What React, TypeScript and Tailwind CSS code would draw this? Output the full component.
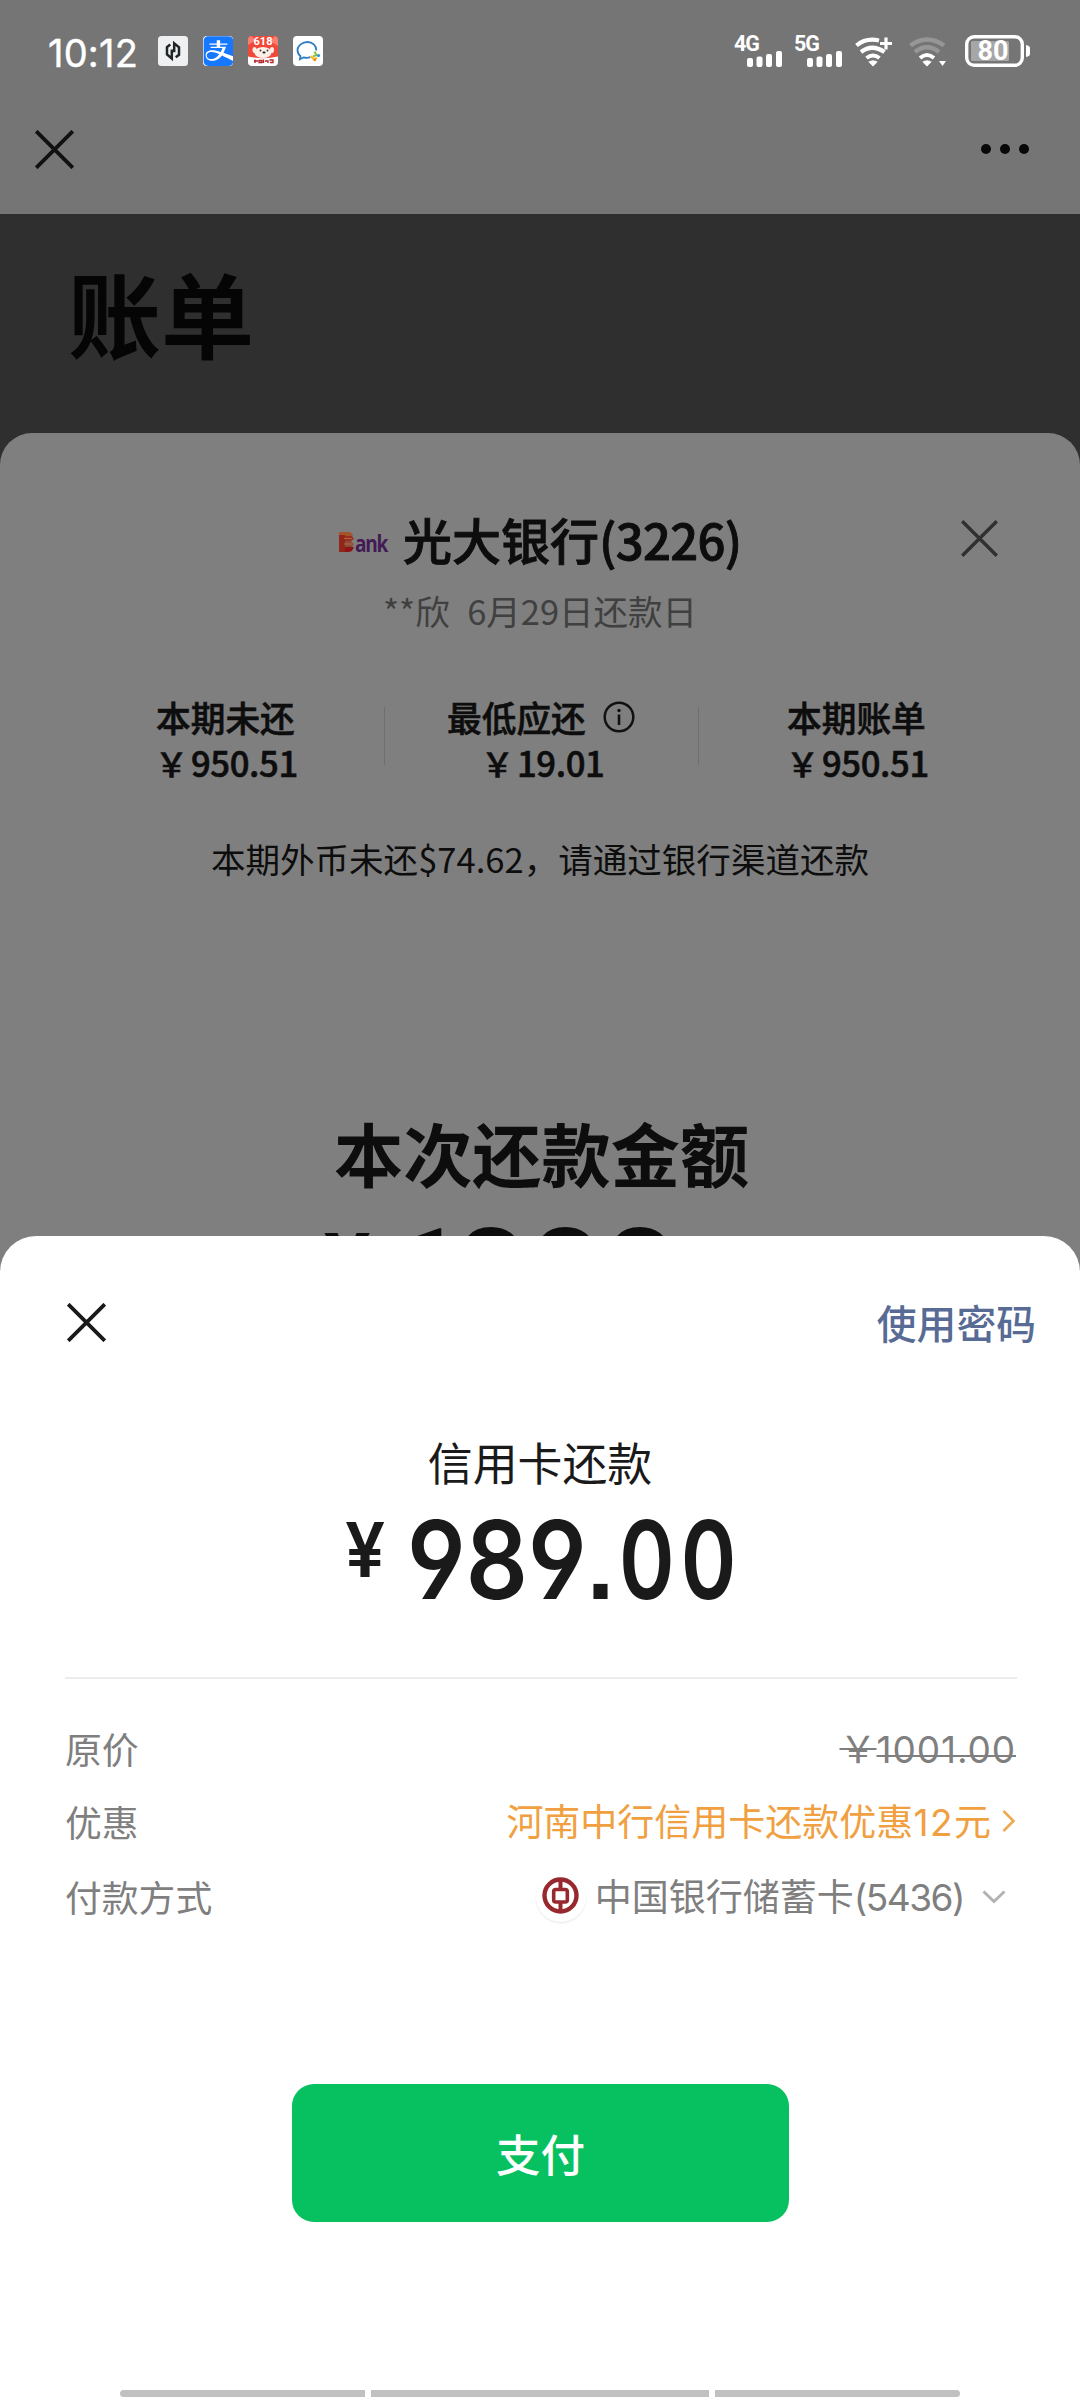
import type { ReactNode } from "react";
import { FaAlipay } from "react-icons/fa";

function Cross({ size, color, width }: { size: number; color: string; width: number }) {
  return (
    <svg width={size} height={size} viewBox={`0 0 ${size} ${size}`} className="block shrink-0">
      <path d={`M1.2 1.2L${size - 1.2} ${size - 1.2}M${size - 1.2} 1.2L1.2 ${size - 1.2}`} stroke={color} strokeWidth={width} fill="none" />
    </svg>
  );
}

function AppIcons() {
  return (
    <div className="ml-[23px] flex gap-[15px]">
      <svg width="30" height="30" viewBox="0 0 30 30">
        <rect width="30" height="30" rx="3.5" fill="#eef0f2" />
        <path d="M12.300 8.500L9 11v7.500l4.800 4V13.500M17.700 21.300L21 18.800v-7.500l-4.800-4v9" stroke="#222527" strokeWidth="2.500" fill="none" />
      </svg>
      <div className="flex size-[30px] items-center justify-center overflow-hidden rounded-[4px] bg-white">
        <FaAlipay color="#1677ff" className="h-[34px] w-[31px] shrink-0" />
      </div>
      <div className="relative size-[30px] overflow-hidden rounded-[4px] bg-[#f0493a]">
        <svg width="30" height="30" viewBox="0 0 30 30" className="block">
          <path d="M0 9L8 4 3 0H0zM30 10l-8-5 5-5h3z" fill="#f98070" />
          <path d="M0 20.500Q15 24 30 20.500V30H0z" fill="#fff" />
          <ellipse cx="15" cy="16.500" rx="8.500" ry="5.500" fill="#fdeee8" />
          <ellipse cx="6.500" cy="14" rx="2" ry="3" fill="#fdeee8" />
          <ellipse cx="24" cy="14" rx="2" ry="3" fill="#fdeee8" />
          <circle cx="12.500" cy="14.500" r="0.900" fill="#333" />
          <circle cx="19.500" cy="14.500" r="0.900" fill="#333" />
          <ellipse cx="16" cy="16.500" rx="1.600" ry="1" fill="#222" />
          <path d="M6 25h4M7 23.500v3.500M11 24.500h3v2h-3zM15.500 23.500v3.500M17 25h3v2M21.500 24h3.500v2.500h-3" stroke="#b3242b" strokeWidth="1.300" fill="none" />
        </svg>
        <span className="absolute left-0 top-[1px] w-full text-center font-['Roboto',sans-serif] text-[11px] font-bold leading-[10px] text-white">618</span>
      </div>
      <svg width="30" height="30" viewBox="0 0 30 30">
        <rect width="30" height="30" rx="4" fill="#fff" />
        <path d="M23.400 14.500C23.400 9.500 19.500 6 14.500 6S4.500 9.600 4.500 14c0 2.600 1.200 4.800 3 6.200l-.6 3 3.600-1.800c2.500.7 4.800.6 6.800-.2" stroke="#2f7dc4" strokeWidth="1.800" fill="none" />
        <path d="M21.500 15.500l2 3.500-3.500 1.500" stroke="#8bc53f" strokeWidth="2" fill="none" />
        <path d="M17.800 20l3.500 4 2.500-2.500" stroke="#fbb829" strokeWidth="2.200" fill="none" />
        <circle cx="25.500" cy="19.500" r="1.600" fill="#2f8fe0" />
        <circle cx="22" cy="23.800" r="1.200" fill="#f07a2b" />
      </svg>
    </div>
  );
}

function Signal({ label }: { label: string }) {
  return (
    <div className="relative h-[32px] w-[48px]">
      <span className="absolute -left-px top-0 font-['Roboto',sans-serif] text-[21.500px] font-bold leading-[16px] tracking-[-1.200px] text-white">{label}</span>
      <svg width="48" height="32" viewBox="0 0 48 32" className="block" fill="#fff">
        <rect x="12" y="22" width="6" height="9" rx="2" />
        <rect x="21.500" y="20.500" width="6" height="10.500" rx="2" />
        <rect x="31" y="18" width="6" height="13" rx="2" />
        <rect x="41" y="15" width="6" height="16" rx="2" />
      </svg>
    </div>
  );
}

function StatusIcons() {
  return (
    <div className="ml-auto mr-[49px] flex items-start">
      <Signal label="4G" />
      <div className="w-[12px]" />
      <Signal label="5G" />
      <svg width="38" height="32" viewBox="0 0 38 32" className="ml-[12px]" fill="none" stroke="#fff">
        <path d="M1.500 9.500Q11 1.500 24 4.500" strokeWidth="4.200" />
        <path d="M6 16Q17 7.500 29.500 16" strokeWidth="4.200" />
        <path d="M11.500 22Q18 17 24.500 22" strokeWidth="4" />
        <path d="M18 30.500l-4.700-4.700q4.700-3 9.400 0z" fill="#fff" stroke="none" />
        <path d="M31 1.500v12M25 7.500h12" strokeWidth="3.200" />
      </svg>
      <svg width="38" height="32" viewBox="0 0 38 32" className="ml-[16px]" fill="none">
        <path d="M1.500 9.500Q18 -2.500 35 9.500" stroke="#969696" strokeWidth="4.500" />
        <path d="M6 16Q18 6.500 30 16" stroke="#969696" strokeWidth="4.500" />
        <path d="M11 22Q18 16 25 22" stroke="#fff" strokeWidth="4" />
        <path d="M18 30.500l-4.700-4.700q4.700-3 9.400 0z" fill="#fff" />
        <path d="M30 25h7l-3.500 5z" fill="#fff" />
      </svg>
      <div className="relative ml-[18px] -mt-px h-[32px] w-[66px]">
        <svg width="66" height="32" viewBox="0 0 66 32" className="block">
          <rect x="1.700" y="1.700" width="55.600" height="28.600" rx="7.500" fill="none" stroke="#fff" strokeWidth="3.400" />
          <rect x="6" y="6" width="38" height="20" rx="1.500" fill="#a6a6a6" />
          <path d="M61 10q4 .8 4 3v6q0 2.300-4 3z" fill="#fff" />
        </svg>
        <span className="absolute left-0 top-0 w-[56px] text-center font-['Roboto',sans-serif] text-[27px] font-bold leading-[33px] text-white">80</span>
      </div>
    </div>
  );
}

function Stat({ label, amount, className, info }: { label: string; amount: string; className: string; info?: boolean }) {
  return (
    <div className={className}>
      <div className="flex h-[46px] items-center">
        <span>{label}</span>
        {info && (
          <svg width="32" height="32" viewBox="0 0 32 32" className="ml-[17px] mb-[1px]">
            <circle cx="16" cy="16" r="14.300" fill="none" stroke="#111" strokeWidth="2.500" />
            <path d="M16 13.500V24" stroke="#111" strokeWidth="2.600" />
            <circle cx="16" cy="9.500" r="1.700" fill="#111" />
          </svg>
        )}
      </div>
      <div className={info ? "-mt-[1px] ml-[34px] leading-[46px]" : "-ml-px -mt-[1px] leading-[46px]"}>
        <span className="mr-[3px] text-[33px]">￥</span>
        <span className="tracking-[-0.400px]">{amount}</span>
      </div>
    </div>
  );
}

function Row({ label, height, children }: { label: string; height: string; children: ReactNode }) {
  return (
    <div className={`flex items-center justify-between ${height}`}>
      <span className="text-[36.800px]">{label}</span>
      <div className="flex items-center">{children}</div>
    </div>
  );
}

export default function App() {
  return (
    <div className="flex h-[2400px] w-[1080px] flex-col overflow-hidden bg-[#2f2f2f] font-['Noto_Sans_CJK_SC',sans-serif]">
      <header className="h-[214px] shrink-0 bg-[#757575]">
        <div className="flex h-[128px] items-start pt-[36px]">
          <span className="ml-[48px] -mt-[3px] w-[87px] whitespace-nowrap font-['Inter',sans-serif] text-[38px] leading-[40px] tracking-[0.200px] text-white [-webkit-text-stroke:0.4px_#fff]">10:12</span>
          <AppIcons />
          <StatusIcons />
        </div>
        <div className="flex h-[42px] items-center justify-between pl-[35px] pr-[51px]">
          <Cross size={39} color="#111" width={3.8} />
          <div className="flex gap-[9px]">
            <i className="size-[10px] rounded-full bg-[#080808]" />
            <i className="size-[10px] rounded-full bg-[#080808]" />
            <i className="size-[10px] rounded-full bg-[#080808]" />
          </div>
        </div>
      </header>

      <div className="h-[219px] shrink-0 pl-[68px] pt-[52px] text-[93px] font-bold leading-[92px] text-[#050505]">账单</div>

      <main className="flex flex-1 flex-col rounded-t-[32px] bg-[#7f7f7f] text-[#0d0d0d]">
        <div className="h-[803px] shrink-0 overflow-hidden">
          <div className="flex h-[144px] items-start pl-[339px] pt-[75px]">
            <div className="mt-[22px] flex h-[28px] w-[50px] items-end">
              <svg width="16" height="22" viewBox="0 0 16 22" className="mb-[4px] shrink-0">
                <path d="M0 0h11l3 3-2 2H0z" fill="#a4532a" />
                <path d="M0 4h13l2 3-3 2H0z" fill="#97301f" />
                <path d="M0 9h12l3 3-2 3H0z" fill="#8c4a3c" />
                <path d="M0 15h15l-2 4-3 1H0z" fill="#8c1414" />
                <path d="M0 3h6v17H0z" fill="#92241a" />
                <path d="M5 6.500h8M5 12h9" stroke="#b0643c" strokeWidth="1" />
              </svg>
              <span className="origin-left scale-x-[0.83] font-['Open_Sans',sans-serif] text-[23px] font-bold leading-[30px] tracking-[-1.500px] text-[#431a55]">ank</span>
            </div>
            <h1 className="ml-[14px] mt-px whitespace-nowrap text-[49px] font-medium leading-[60px] [-webkit-text-stroke:0.9px_#0d0d0d]">光大银行<span className="tracking-[-0.700px]">(3226)</span></h1>
            <div className="ml-auto mr-[82px] mt-[12px]">
              <Cross size={37} color="#303030" width={3.4} />
            </div>
          </div>
          <div className="h-[112px] whitespace-pre pl-[383px] pt-[9px] text-[34.500px] leading-[48px] text-[#404040] [word-spacing:1px]">**欣  6月29日还款日</div>
          <div className="flex h-[140px] pt-[5px] text-[34.700px] font-medium [-webkit-text-stroke:0.600px_#0d0d0d]">
            <Stat className="w-[228px] whitespace-nowrap pl-[156px]" label="本期未还" amount="950.51" />
            <i className="ml-[156px] mt-[13px] h-[58px] w-px bg-[#6f6f6f]" />
            <Stat className="ml-[62px] w-[228px] whitespace-nowrap" label="最低应还" amount="19.01" info />
            <i className="ml-[23px] mt-[13px] h-[58px] w-px bg-[#6f6f6f]" />
            <Stat className="ml-[88px] whitespace-nowrap" label="本期账单" amount="950.51" />
          </div>
          <div className="h-[280px] text-center text-[34.550px] leading-[58px]">本期外币未还$74.62，请通过银行渠道还款</div>
          <div className="h-[90px] whitespace-nowrap pl-[334px] pt-[3px] text-[69.200px] font-bold leading-[80px]">本次还款金额</div>
          <div className="flex whitespace-nowrap pl-[324px] font-['Roboto',sans-serif] font-bold">
            <span className="mt-[16px] w-[64px] text-[86px] leading-[100px]">¥</span>
            <span className="text-[136px] leading-[160px] tracking-[-3.500px]"><span className="tracking-[-14px]">1</span>000</span>
          </div>
        </div>

        <section className="flex flex-1 flex-col rounded-t-[36px] bg-white text-[#1a1a1a]">
          <div className="flex h-[172px] items-center justify-between pl-[67px] pr-[44px]">
            <Cross size={39} color="#1a1a1a" width={3.8} />
            <span className="text-[39.800px] font-medium leading-[50px] text-[#576b95]">使用密码</span>
          </div>
          <div className="mt-[24px] text-center text-[44.900px] leading-[60px]">信用卡还款</div>
          <div className="mt-[8px] flex h-[177px] items-start whitespace-nowrap pl-[345px] font-['Inter',sans-serif] font-semibold">
            <span className="mt-[5px] w-[62px] origin-left scale-x-[0.95] text-[75px] leading-[90px]">¥</span>
            <span className="mt-[5px] w-[178px] origin-left scale-x-[0.9] text-[108px] leading-[110px] [font-feature-settings:'cv04']">989</span>
            <span className="mt-[5px] w-[34px] text-[108px] leading-[110px] [font-feature-settings:'ss07']"><span className="inline-block w-[30px] origin-left scale-x-[0.9]">.</span></span>
            <span className="mt-[5px] origin-left scale-x-[0.78] text-[108px] leading-[110px] tracking-[8px]">00</span>
          </div>
          <div className="ml-[65px] mr-[63px] border-t-2 border-[#ececec] pt-[33px] text-[37px] text-[#7f7f7f]">
            <Row label="原价" height="h-[73px]">
              <span className="mr-px line-through decoration-2"><span>￥</span><span className="font-['Inter',sans-serif] tracking-[0.900px]">1001.00</span></span>
            </Row>
            <Row label="优惠" height="h-[74px]">
              <span className="text-[#f0a040]">河南中行信用卡还款优惠<span className="font-['Inter',sans-serif] tracking-[1.500px]">12</span>元</span>
              <svg width="14" height="24" viewBox="0 0 14 24" className="-mt-[2px] ml-[11px] mr-px">
                <path d="M1.500 2l10 10-10 10" fill="none" stroke="#f0a850" strokeWidth="2.500" />
              </svg>
            </Row>
            <Row label="付款方式" height="h-[75px]">
              <span className="mr-[9px] flex size-[50px] items-center justify-center rounded-full shadow-[0_1px_2px_rgba(0,0,0,0.1)]">
                <svg width="37" height="37" viewBox="0 0 37 37" className="mb-[3px]">
                  <circle cx="18.500" cy="18.500" r="16" fill="none" stroke="#97282e" strokeWidth="4.400" />
                  <path d="M18.500 2v10M18.500 25v10" stroke="#97282e" strokeWidth="4" />
                  <rect x="11.700" y="12.500" width="13.600" height="12.500" rx="2" fill="none" stroke="#97282e" strokeWidth="3.600" />
                </svg>
              </span>
              <span>中国银行储蓄卡<span className="font-['Inter',sans-serif] tracking-[-1.500px]">(5436)</span></span>
              <svg width="24" height="14" viewBox="0 0 24 14" className="ml-[18px] mr-[11px]">
                <path d="M1.500 1.500L12 11.500l10.500-10" fill="none" stroke="#b2b2b2" strokeWidth="3" />
              </svg>
            </Row>
          </div>
          <button className="ml-[292px] mt-[150px] h-[138px] w-[497px] shrink-0 rounded-[22px] bg-[#07c160] text-[44.500px] font-medium leading-[60px] text-white">支付</button>
          <div className="mx-[120px] mb-[3px] mt-auto flex h-[7px] gap-[6px]">
            <i className="w-[245px] rounded-l-full bg-[#c1c1c1]" />
            <i className="flex-1 bg-[#c1c1c1]" />
            <i className="w-[245px] rounded-r-full bg-[#c1c1c1]" />
          </div>
        </section>
      </main>
    </div>
  );
}
